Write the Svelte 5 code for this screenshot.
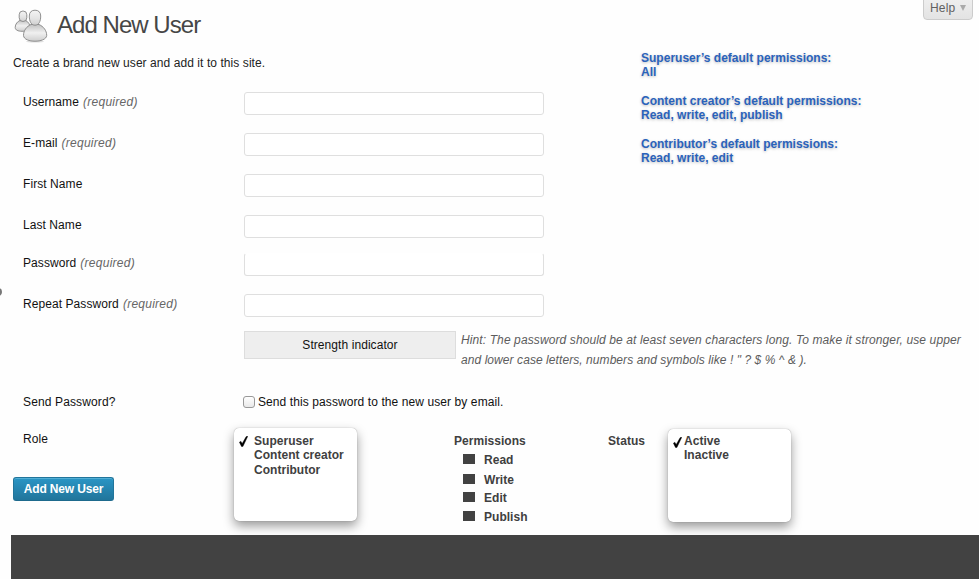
<script>
  const fields = [
    { label: 'Username', required: true, height: 41 },
    { label: 'E-mail', required: true, height: 41 },
    { label: 'First Name', height: 41 },
    { label: 'Last Name', height: 38 },
    { label: 'Password', required: true, height: 41, open: true },
    { label: 'Repeat Password', required: true, height: 37 }
  ];
  const defaults = [
    ['Superuser’s default permissions:', 'All'],
    ['Content creator’s default permissions:', 'Read, write, edit, publish'],
    ['Contributor’s default permissions:', 'Read, write, edit']
  ];
  const roles = ['Superuser', 'Content creator', 'Contributor'];
  const statuses = ['Active', 'Inactive'];
  const permissions = [
    { name: 'Read', height: 20 },
    { name: 'Write', height: 18 },
    { name: 'Edit', height: 19 },
    { name: 'Publish', height: 18 }
  ];
</script>

{#snippet check()}
  <svg class="check" width="9" height="11" viewBox="0 0 9 11"><path d="M.4 6.2 1.8 5.2 3.2 7.5 7.2.6 8.8.2 3.9 10.5 2.5 10.5Z" fill="#000" stroke="#000" stroke-width=".4" /></svg>
{/snippet}

<div class="page">
  <span class="collapse"></span>
  <button class="help">Help <i></i></button>

  <header>
    <svg width="34" height="34" viewBox="0 0 34 34">
      <defs>
        <linearGradient id="body" x2="0" y2="1"><stop stop-color="#c2c2c2" /><stop offset=".5" stop-color="#f0f0f0" /><stop offset="1" stop-color="#cecece" /></linearGradient>
        <linearGradient id="head" x2="0" y2="1"><stop stop-color="#f4f4f4" /><stop offset=".55" stop-color="#e4e4e4" /><stop offset="1" stop-color="#cfcfcf" /></linearGradient>
      </defs>
      <ellipse cx="21" cy="32.6" rx="9" ry="1" fill="#ddd" />
      <g stroke="#858585" stroke-width=".9">
        <path d="M1.200 18.500C1.200 15 3.500 12.500 6.200 11.300H11.500C14.500 13 16 15.500 16 18.500C15.500 21.500 11 22.300 8 22.300C4 22.300 1.200 21 1.200 18.500Z" fill="url(#body)" />
        <rect x="5.200" y="2" width="7.600" height="10.500" rx="3.700" fill="url(#head)" />
        <path d="M9.500 26.500C9.500 21.500 12.500 17.500 17 15.500H25C29.500 17.500 32.700 21.500 32.700 26.500C32.300 30.500 26.500 32.200 21 32.200C15.500 32.200 9.800 30.500 9.500 26.500Z" fill="url(#body)" />
        <path d="M21 1.200C24.500 1.200 26.700 3.200 26.700 7C26.700 12.500 24.800 16.200 21 16.200C17.200 16.200 15.300 12.500 15.300 7C15.300 3.200 17.500 1.200 21 1.200Z" fill="url(#head)" />
      </g>
    </svg>
    <h1>Add New User</h1>
  </header>

  <div class="content">
    <main>
      <p class="intro">Create a brand new user and add it to this site.</p>
      {#each fields as f}
        <div class="row" style="height: {f.height}px">
          <label for={f.label}><span>{f.label}</span>{#if f.required}&nbsp;<em>(required)</em>{/if}</label>
          <input id={f.label} class:open={f.open} />
        </div>
      {/each}
    </main>
    <aside>
      {#each defaults as [who, what]}
        <p><span>{who}</span><br /><span>{what}</span></p>
      {/each}
    </aside>
  </div>

  <div class="strength">
    <div class="meter"><span>Strength indicator</span></div>
    <p><span class="l1">Hint: The password should be at least seven characters long. To make it stronger, use upper</span><br /><span class="l2">and lower case letters, numbers and symbols like ! " ? $ % ^ &amp; ).</span></p>
  </div>

  <div class="send">
    <span class="name">Send Password?</span>
    <input type="checkbox" id="send" />
    <label for="send">Send this password to the new user by email.</label>
  </div>

  <section>
    <div class="left">
      <span>Role</span>
      <button class="submit"><span>Add New User</span></button>
    </div>
    <ul class="menu">
      {#each roles as r, i}<li>{#if i === 0}{@render check()}{/if}<span>{r}</span></li>{/each}
    </ul>
    <div class="perms">
      <b>Permissions</b>
      {#each permissions as p}
        <div style="height: {p.height}px"><i></i><span>{p.name}</span></div>
      {/each}
    </div>
    <b class="status">Status</b>
    <ul class="menu second">
      {#each statuses as s, i}<li>{#if i === 0}{@render check()}{/if}<span>{s}</span></li>{/each}
    </ul>
  </section>
  <footer></footer>
</div>

<style>
  :global(body) { background: #fdfdfd; }
  .page { position: relative; width: 979px; height: 579px; overflow: hidden; background: #fefefe; color: #111; font: 12px/14px "Liberation Sans", Arial, sans-serif; display: flex; flex-direction: column; letter-spacing: .07px; }
  p, h1, ul { margin: 0; padding: 0; }
  button { font-family: inherit; cursor: pointer; }
  .collapse { position: absolute; left: -6px; top: 288px; width: 8px; height: 8px; border-radius: 50%; background: #777; }
  .help { position: absolute; right: 6px; top: -1px; width: 50px; height: 21px; padding: 0 0 3px 6px; display: flex; align-items: center; border: 1px solid #ccc; border-radius: 0 0 4px 4px; background: linear-gradient(#eee, #e3e3e3); color: #606060; font-size: 12px; gap: 5px; letter-spacing: .2px; }
  .help i { border: 3.5px solid transparent; border-top: 6px solid #aaa; border-bottom: 0; }
  header { height: 50px; display: flex; box-sizing: border-box; padding: 9px 0 0 14px; gap: 9px; }
  h1 { font-size: 24px; line-height: 31px; font-weight: 400; color: #464646; letter-spacing: -.96px; white-space: nowrap; }
  .content { display: flex; height: 281px; }
  main { width: 641px; }
  .intro { height: 42px; padding: 6px 0 0 13px; box-sizing: border-box; color: #222; }
  .row { display: flex; align-items: flex-start; }
  .row label { width: 221px; padding: 3px 0 0 23px; }
  .row input { box-sizing: border-box; width: 300px; height: 23px; border: 1px solid #dfdfdf; border-radius: 3px; background: #fff; outline: 0; }
  .row input.open { border-top-color: transparent; }
  em { color: #666; margin-left: .7px; letter-spacing: .26px; }
  aside { padding-top: 1px; color: #2a62bb; font-weight: 700; line-height: 14.300px; letter-spacing: .01px; text-shadow: 0 1px 3px #0004; }
  aside p { height: 43.100px; white-space: nowrap; }
  .strength { display: flex; height: 64px; padding-left: 244px; gap: 5px; }
  .meter { width: 212px; height: 28px; box-sizing: border-box; border: 1px solid #ddd; background: #eee; text-align: center; line-height: 26px; }
  .strength p { font-style: italic; color: #5c5c5c; line-height: 20px; margin-top: -1px; white-space: nowrap; }
  .l1 { letter-spacing: .11px; }
  .send { display: flex; height: 33px; align-items: flex-start; }
  .name { width: 220px; padding-left: 23px; letter-spacing: .13px; }
  .send label { letter-spacing: .09px; }
  .send input { appearance: none; box-sizing: border-box; width: 12px; height: 12px; margin: 1px 3px 0 0; border: 1px solid #999; border-radius: 3px; background: linear-gradient(#fff, #e9e9e9); }
  section { display: flex; height: 107px; color: #404040; }
  .left { width: 234px; display: flex; flex-direction: column; align-items: flex-start; color: #111; }
  .left > span { margin: 4px 0 0 23px; }
  .submit { margin: 31px 0 0 13px; width: 101px; height: 24px; border: 1px solid #21759b; border-bottom-color: #1e6a8d; border-radius: 3px; background: linear-gradient(#2a95c5, #21759b); box-shadow: inset 0 1px 0 #78c8e680; color: #fff; font-weight: 700; font-size: 12px; padding: 0; letter-spacing: -.15px; }
  .menu { position: relative; width: 123px; height: 93px; box-sizing: border-box; padding: 6px 0 0 20px; border-radius: 5px; background: #fff; list-style: none; font-weight: 700; line-height: 14.300px; letter-spacing: .03px; box-shadow: 0 0 1px #0006, 0 5px 11px #0006; white-space: nowrap; }
  .second { margin-top: 1px; padding-left: 16px; padding-top: 5px; }
  .menu li { height: 14.300px; position: relative; }
  .check { position: absolute; left: -15px; top: 2px; }
  .second .check { left: -11px; top: 3px; }
  .perms { padding: 6px 0 0 97px; width: 154px; letter-spacing: .03px; }
  .perms b { display: block; height: 12px; }
  .perms div { display: flex; align-items: flex-start; padding-left: 9px; }
  .perms i { width: 12px; height: 10px; background: #424242; margin: 8px 9px 0 0; }
  .perms span { font-weight: 700; margin-top: 6.500px; }
  .status { width: 60px; padding-top: 6px; }
  footer { height: 44px; margin-left: 11px; background: #424242; }
</style>
